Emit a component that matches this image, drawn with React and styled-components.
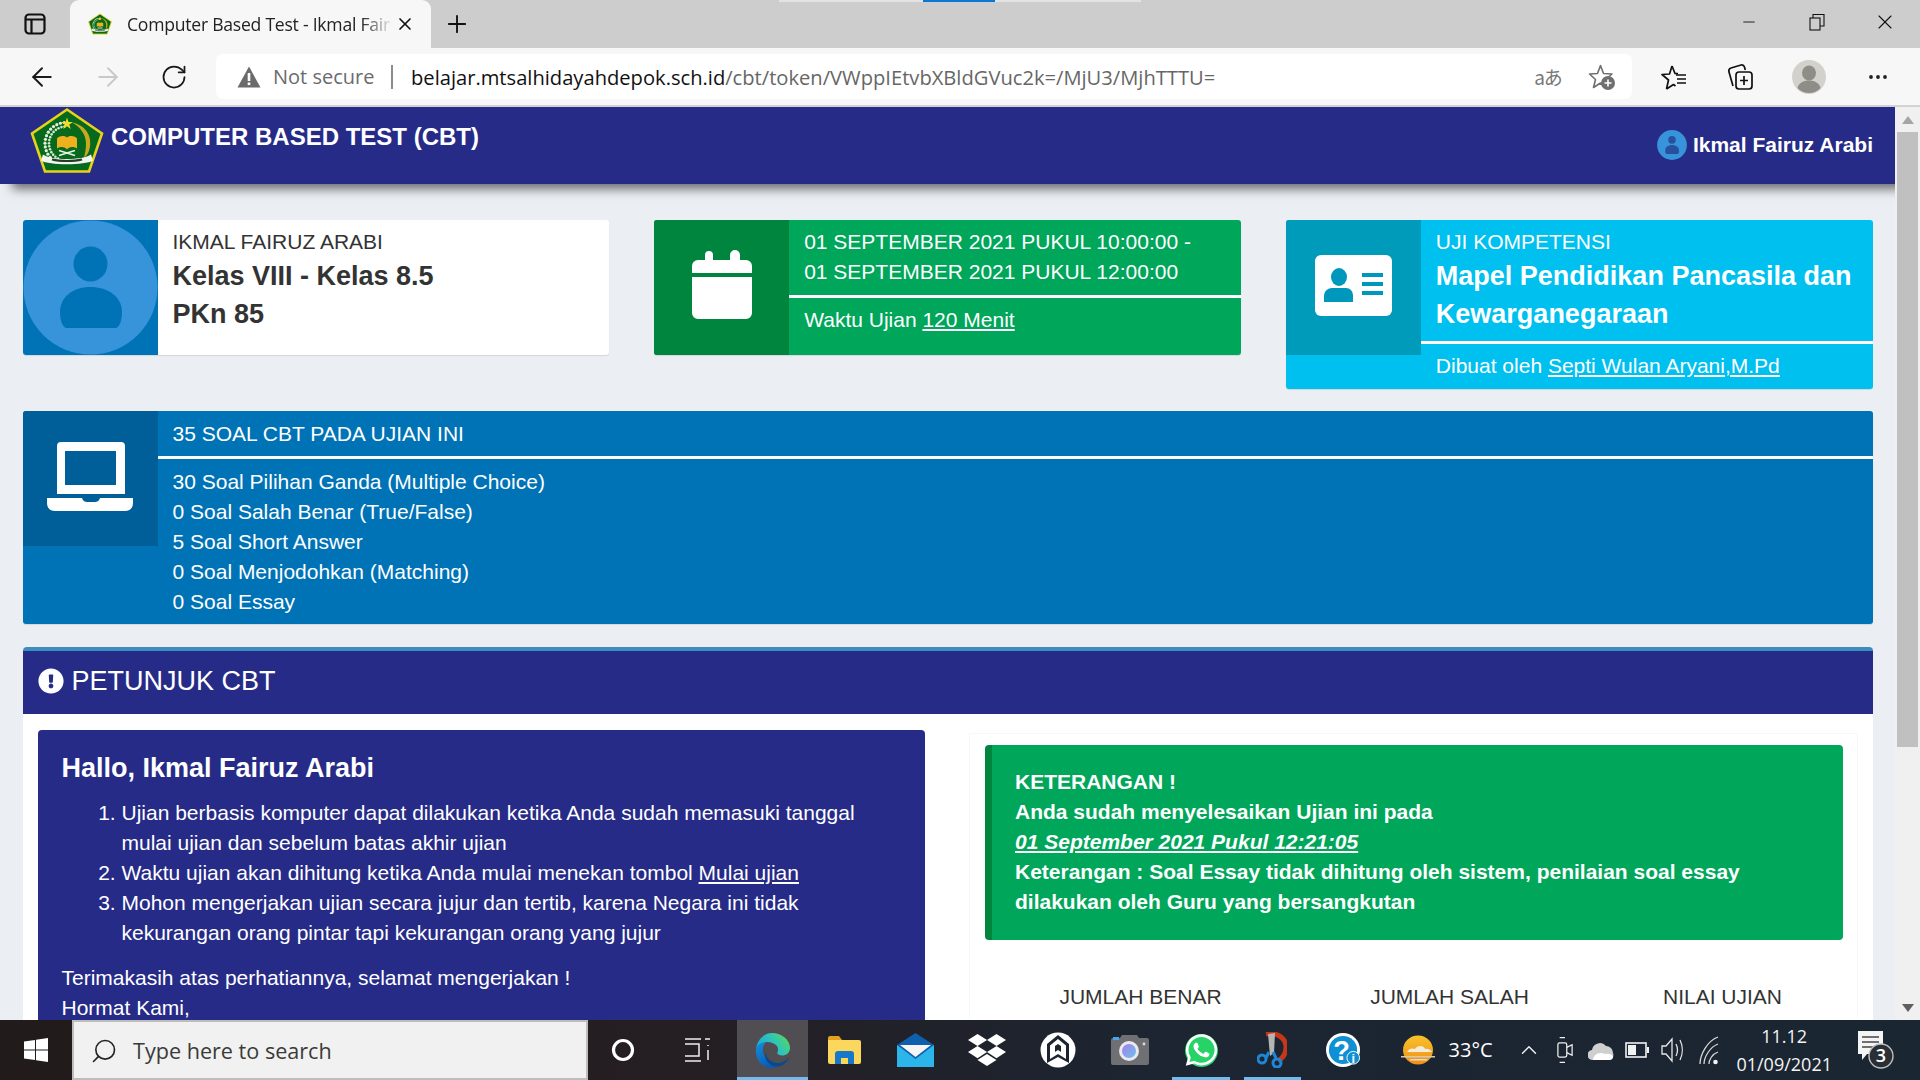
import React from 'react';
import styled, { createGlobalStyle } from 'styled-components';
import { ArrowLeft, ArrowRight, RotateCw, X, Plus, Minus, ChevronUp, Search } from 'lucide-react';
import { FaDropbox, FaWhatsapp, FaExclamationCircle } from 'react-icons/fa';

const Global = createGlobalStyle`
  html, body { margin: 0; padding: 0; overflow: hidden; background: #ecf0f5; }
  * { box-sizing: border-box; }
  #root { height: 1080px; font-family: "Liberation Sans", Arial, sans-serif; }
`;
const UI = `"Open Sans", "Noto Sans", sans-serif`;

const Screen = styled.div`width: 1920px; height: 1080px; display: flex; flex-direction: column; overflow: hidden; position: relative;`;

/* ---------- browser chrome ---------- */
const TabStrip = styled.div`height: 48px; flex: none; background: #cdcdcd; display: flex; align-items: stretch; position: relative;`;
const LoadStrip = styled.div`position: absolute; top: 0; left: 779px; width: 362px; height: 2px; background: #e3e3e3;`;
const LoadThumb = styled.div`width: 72px; height: 2px; margin-left: 144px; background: #0a78d2;`;
const StripBtn = styled.div`width: ${p => p.$w}px; display: flex; align-items: center; justify-content: center; color: #111; flex: none;`;
const Tab = styled.div`width: 361px; height: 48px; flex: none; background: #f7f7f7; border-radius: 9px 9px 0 0; display: flex; align-items: center; padding-left: 18px;`;
const TabTitle = styled.div`
  width: 266px; margin-left: 15px; font: 17.6px/24px ${UI}; letter-spacing: -.25px; color: #222; white-space: nowrap; overflow: hidden;
  -webkit-mask-image: linear-gradient(90deg, #000 88%, transparent 100%);
  mask-image: linear-gradient(90deg, #000 88%, transparent 100%);
`;
const TabClose = styled.div`display: flex; margin-left: 2px;`;
const WinControls = styled.div`margin-left: auto; display: flex; height: 44px; padding-right: 1px;`;
const Toolbar = styled.div`height: 59px; flex: none; background: #f7f7f7; border-bottom: 2px solid #d2d2d2; display: flex; align-items: center; padding-left: 9px;`;
const NavBtn = styled.div`width: ${p => p.$w || 66}px; flex: none; display: flex; align-items: center; justify-content: center; color: ${p => p.$c || '#1a1a1a'};`;
const Address = styled.div`width: 1416px; height: 45px; flex: none; margin: 0 8px 0 9px; background: #fff; border-radius: 7px; display: flex; align-items: center; padding-left: 21px; padding-right: 3px;`;
const NotSecure = styled.span`margin-left: 12px; font: 20px/26px ${UI}; color: #6b6b6b; width: 118px; flex: none; white-space: nowrap;`;
const Sep = styled.span`width: 2px; height: 24px; background: #8c8c8c; flex: none;`;
const Url = styled.div`margin-left: 18px; flex: 1; font: 20.15px/26px ${UI}; color: #111; white-space: nowrap;`;
const UrlRest = styled.span`color: #666;`;
const Translate = styled.span`font: 19px/24px "Noto Sans CJK JP", "Open Sans", sans-serif; color: #777; letter-spacing: -1px;`;

/* ---------- page ---------- */
const Viewport = styled.div`flex: 1; min-height: 0; display: flex;`;
const Page = styled.div`flex: 1; min-width: 0; background: #ebeef3; overflow: hidden;`;
const Header = styled.header`
  height: 77px; background: #262b87; display: flex; align-items: flex-start; padding-left: 30px; padding-right: 22px;
  position: relative; z-index: 1; box-shadow: 12px 5px 10px rgba(0,0,0,.55); color: #fff;
`;
const HeaderTitle = styled.div`margin: 15px 0 0 7px; font: bold 24px/30px "Liberation Sans", Arial, sans-serif; white-space: nowrap;`;
const HeaderUser = styled.div`margin: 23px 0 0 auto; display: flex; align-items: center; gap: 6px; font: bold 21px/30px "Liberation Sans", Arial, sans-serif; white-space: nowrap;`;
const Content = styled.div`padding: 36px 22.5px 0;`;
const CardRow = styled.div`display: grid; grid-template-columns: repeat(3, 1fr); gap: 45px; align-items: start;`;
const Card = styled.div`
  min-height: 135px; background: ${p => p.$bg}; color: ${p => p.$fg || '#fff'}; border-radius: 3px; overflow: hidden; display: block;
  box-shadow: 0 1px 1px rgba(0,0,0,.1); margin-bottom: 22.5px; font-size: 21px; line-height: 30px;
`;
const CardIcon = styled.div`float: left; width: 135px; height: 135px; background: ${p => p.$bg}; display: flex;`;
const CardBody = styled.div`margin-left: 135px; padding: ${p => p.$wide ? '7.5px' : '6.5px'} 15px 7.5px;`;
const CardLabel = styled.div`white-space: nowrap;`;
const CardNumber = styled.div`font-weight: bold; font-size: 27px; line-height: 38px;`;
const Divider = styled.div`height: 3px; background: #fff; margin: ${p => p.$wide ? '7.5px -15px' : '8.5px -15px 7px'};`;
const Link = styled.span`text-decoration: underline;`;

const Section = styled.section`background: #fff; border-top: 4.5px solid #3c8dbc; border-radius: 4px 4px 0 0;`;
const SectionHead = styled.div`height: 63px; background: #262b87; color: #fff; display: flex; align-items: center; gap: 8px; padding: 0 15px 2px; font-size: 27px;`;
const SectionBody = styled.div`display: grid; grid-template-columns: 887px 889px; column-gap: 44px; padding: 16px 15px 0;`;
const HelloBox = styled.div`background: #262b87; color: #fff; border-radius: 4px; padding: 23.5px 24px; font-size: 21px; line-height: 30px;`;
const HelloTitle = styled.h4`margin: 0 0 14.5px; font-size: 27px; line-height: 30px; font-weight: bold;`;
const Steps = styled.ol`margin: 0 0 15px; padding-left: 60px;`;
const Para = styled.p`margin: 0;`;
const Result = styled.div`border: 1px solid #f8f8f8; margin-top: 3px; padding: 11px 14px 15px 15px;`;
const Notice = styled.div`background: #00a65a; color: #fff; border-left: 7px solid #00853f; border-radius: 4px; padding: 22.5px 23.5px; font-weight: bold; font-size: 21px; line-height: 30px;`;
const NoticeDate = styled.em`text-decoration: underline; display: block;`;
const ScoreRow = styled.div`display: grid; grid-template-columns: 312px 306px 240px; margin-top: 42px; text-align: center; font-size: 21px; line-height: 30px; color: #333;`;

const ScrollTrack = styled.div`width: 25px; flex: none; background: #f0f0f1; display: flex; flex-direction: column; align-items: center;`;
const ScrollArrow = styled.div`
  height: 25px; width: 25px; flex: none; display: flex; align-items: center; justify-content: center; margin-top: ${p => p.$down ? 'auto' : '0'};
  &::before { content: ''; border-left: 6px solid transparent; border-right: 6px solid transparent;
    ${p => p.$down ? 'border-top: 8px solid #5f5f5f;' : 'border-bottom: 8px solid #a5a5a5;'} }
`;
const ScrollThumb = styled.div`width: 21px; height: 615px; background: #c0c0c0; flex: none;`;

/* ---------- taskbar ---------- */
const Taskbar = styled.div`height: 60px; flex: none; background: linear-gradient(90deg, #211b1b 0%, #251e22 35%, #1c2531 60%, #1a2632 100%); display: flex; color: #fff; position: relative;`;
const StartBtn = styled.div`width: 72px; flex: none; display: flex; align-items: center; justify-content: center;`;
const SearchBox = styled.div`width: 516px; flex: none; background: #f1f1f1; border: 2px solid #bdbdbd; display: flex; align-items: center; padding: 2px 0 0 16px; gap: 15px; font: 21.6px/30px ${UI}; color: #3a3a3a;`;
const TbBtn = styled.div`width: ${p => p.$w}px; flex: none; display: flex; align-items: center; justify-content: center;`;
const Slot = styled.div`
  width: 71.4px; flex: none; display: flex; align-items: center; justify-content: center; position: relative;
  background: ${p => p.$active ? '#504e53' : 'transparent'};
  &::after {
    content: ''; position: absolute; bottom: 0; height: 3px; background: #76b9ed;
    left: ${p => p.$active ? '0' : '7px'}; right: ${p => p.$active ? '0' : '7px'};
    display: ${p => p.$open ? 'block' : 'none'};
  }
`;
const Weather = styled.div`width: 131.700px; flex: none; display: flex; align-items: center; padding-left: 21px; gap: 14px; font: 20px/26px ${UI};`;
const TrayIcon = styled.div`width: 36px; flex: none; display: flex; align-items: center; justify-content: center; color: #f2f2f2;`;
const Clock = styled.div`width: 114px; flex: none; text-align: center; font: 18px/28px ${UI}; padding-top: 2px; color: #f4f4f4;`;
const Notif = styled.div`width: 79px; flex: none; display: flex; align-items: center; justify-content: center; padding-right: 10px;`;

/* ---------- drawings ---------- */
const Logo = ({ w, h }) => {
  const dots = [];
  for (let i = 0; i < 15; i++) {
    const a = (95 + i * 10.5) * Math.PI / 180;
    dots.push(<circle key={i} cx={36 + 21 * Math.cos(a)} cy={36 - 21 * Math.sin(a)} r="1.600" fill="#e4efe0" />);
    dots.push(<circle key={'b' + i} cx={36 + 17 * Math.cos(a)} cy={36 - 17 * Math.sin(a)} r="1.300" fill="#d6e6cf" />);
  }
  return (
    <svg width={w} height={h} viewBox="0 0 74 66">
      <path d="M37 2 72 26 59 64H15L2 26Z" fill="#07691b" stroke="#e6d21a" strokeWidth="2.600" strokeLinejoin="miter" />
      <path d="M42 15c12 2 20 12 18 24-1 6-3 9-6 11 1-4 2-9 2-14 0-9-6-17-14-21Z" fill="#c6a91f" />
      {dots}
      <path d="m37 10 1.500 4.400H43l-3.700 2.700 1.400 4.400-3.700-2.700-3.700 2.700 1.400-4.400-3.700-2.700h4.600Z" fill="#f3dc2d" />
      <path d="M27 31c3-3 7-3 10-1 3-2 7-2 10 1v10c-4-2-7-2-10 1-3-3-6-3-10-1Z" fill="#efb01e" />
      <path d="M29 48 45 43M45 48 29 43" stroke="#e9f1e8" strokeWidth="1.500" />
      <path d="M13 47c8 6 40 6 48 0l2 6c-8 5-44 5-52 0Z" fill="#f1f4ef" />
      <path d="M22 52c8 2 22 2 30 0" stroke="#243d24" strokeWidth="2" fill="none" />
    </svg>
  );
};

const Avatar = ({ size, ink }) => (
  <svg width={size} height={size} viewBox="0 0 135 135">
    <circle cx="67.500" cy="67.500" r="67" fill="#3793da" />
    <ellipse cx="67.500" cy="44" rx="17" ry="17.500" fill={ink} />
    <path d="M37 92c0-15 13-25 30.500-25S99 77 99 92c0 7-2 15-6 16H43c-4-1-6-9-6-16Z" fill={ink} />
  </svg>
);

const CalIcon = () => (
  <svg width="135" height="135" viewBox="0 0 135 135">
    <path fill="#fff" d="M51 35a4 4 0 0 1 8 0v5h17v-5a5 5 0 0 1 10 0v5h6a6 6 0 0 1 6 6v7H38v-7a6 6 0 0 1 6-6h7ZM38 57h60v36a6 6 0 0 1-6 6H44a6 6 0 0 1-6-6Z" />
  </svg>
);
const IdIcon = () => (
  <svg width="135" height="135" viewBox="0 0 135 135">
    <rect x="29" y="35" width="77" height="61" rx="6" fill="#fff" />
    <ellipse cx="53" cy="57" rx="8" ry="9" fill="#0097bc" />
    <path d="M38 82v-6c0-5 4-8 8-8h14c4 0 7 3 7 8v6Z" fill="#0097bc" />
    <path d="M76 53h21v4H76ZM76 62h21v4H76ZM76 71h21v4H76Z" fill="#0097bc" />
  </svg>
);
const LaptopIcon = () => (
  <svg width="135" height="135" viewBox="0 0 135 135">
    <path fill="#fff" fillRule="evenodd" d="M38 31h60a4 4 0 0 1 4 4v48H34V35a4 4 0 0 1 4-4Zm4 9v34h51V40Z" />
    <path fill="#fff" d="M24 87h35c1 3 3 4 5 4h8c2 0 4-1 5-4h33v5c0 5-3 8-8 8H32c-5 0-8-3-8-8Z" />
  </svg>
);
const PanelIcon = () => (
  <svg width="24" height="24" viewBox="0 0 24 24" fill="none" stroke="#111" strokeWidth="2.200">
    <rect x="2.500" y="2.500" width="19" height="19" rx="3.500" />
    <path d="M2.500 7.500h19M8.500 7.500v14" />
  </svg>
);
const RestoreIcon = () => (
  <svg width="16" height="18" viewBox="0 0 16 18" fill="none" stroke="#111" strokeWidth="1.100">
    <rect x="1" y="5" width="10" height="12" />
    <path d="M4 5V1.500h11V13h-4" />
  </svg>
);
const WarnIcon = () => (
  <svg width="24" height="22" viewBox="0 0 24 22">
    <path d="M12 0.500 23.500 21.500H.5Z" fill="#6b6b6b" />
    <rect x="10.700" y="7" width="2.600" height="8" fill="#fff" />
    <rect x="10.700" y="16.500" width="2.600" height="2.600" fill="#fff" />
  </svg>
);
const StarAdd = () => (
  <svg width="28" height="28" viewBox="0 0 28 28" fill="none">
    <path d="M12.500 2.500 15.500 10.500l8.500.5-6.500 5.500 2 8-7-4.500-7 4.500 2-8L1.500 11l8-.5Z" stroke="#6f6f6f" strokeWidth="1.600" strokeLinejoin="round" />
    <circle cx="20" cy="20" r="7" fill="#6f6f6f" />
    <path d="M20 16.500v7M16.500 20h7" stroke="#fff" strokeWidth="1.600" />
  </svg>
);
const FavList = () => (
  <svg width="26" height="26" viewBox="0 0 26 26" fill="none" stroke="#111" strokeWidth="1.700" strokeLinejoin="round">
    <path d="M11 2 14 9.500l3 .2M5.500 25l2-9L1 10.500 8.500 10 11 2M5.500 25l7-4.500 2 1.500" />
    <path d="M15 11h10M16 15h9M16 19h9" />
  </svg>
);
const Collections = () => (
  <svg width="26" height="28" viewBox="0 0 26 28" fill="none" stroke="#111" strokeWidth="1.700">
    <rect x="9" y="9" width="16" height="17" rx="3" />
    <path d="M17 13v9M13 17.500h8" />
    <path d="M6 23 2 9c-.6-2 .5-3.500 2-4l10-3c1.500-.3 3 .5 3.500 2l.8 3" />
  </svg>
);
const Profile = () => (
  <svg width="34" height="34" viewBox="0 0 34 34">
    <circle cx="17" cy="17" r="17" fill="#d2d1cc" />
    <ellipse cx="17" cy="13" rx="7" ry="7.500" fill="#8f8d88" />
    <path d="M5.500 28c1-5 6-7.500 11.500-7.500S27.500 23 28.500 28c-3 3.500-7 5-11.500 5S8.500 31.500 5.500 28Z" fill="#8f8d88" />
  </svg>
);
const Dots = () => (
  <svg width="20" height="6" viewBox="0 0 20 6"><circle cx="3" cy="3" r="1.900" fill="#222" /><circle cx="10" cy="3" r="1.900" fill="#222" /><circle cx="17" cy="3" r="1.900" fill="#222" /></svg>
);
const WinLogo = () => (
  <svg width="24" height="24" viewBox="0 0 24 24" fill="#fff">
    <path d="M0 3.500 11 2v9.500H0ZM12 1.800 24 0v11.500H12ZM0 12.500h11V22L0 20.500ZM12 12.500h12V24l-12-1.800Z" />
  </svg>
);
const Cortana = () => (
  <svg width="24" height="24" viewBox="0 0 24 24"><circle cx="12" cy="12" r="9.500" fill="none" stroke="#fff" strokeWidth="3.200" /></svg>
);
const TaskView = () => (
  <svg width="26" height="24" viewBox="0 0 26 24" fill="none" stroke="#eee" strokeWidth="1.500">
    <path d="M0 1h16M0 6h14v12H0M0 23h16M20 1h5M23 7v1M23 12v10" />
  </svg>
);
const Edge = () => (
  <svg width="37" height="37" viewBox="0 0 37 37">
    <defs>
      <linearGradient id="eg" x1="0" y1="0.800" x2="1" y2="0.300"><stop offset="0" stopColor="#1a9fdc" /><stop offset="0.600" stopColor="#2fc5b8" /><stop offset="1" stopColor="#55d85f" /></linearGradient>
      <linearGradient id="eb" x1="0" y1="0" x2="0.600" y2="1"><stop offset="0" stopColor="#0f8fe0" /><stop offset="1" stopColor="#0c59ae" /></linearGradient>
    </defs>
    <path d="M2 17C3 8 10 1 18 1c10 0 18 7 18 15 0 5-4 7.500-8 7.500-2.500 0-4.500-1-5-2.500 1.500-2 1.500-5-.5-7.500C19 10 13 9 9 11c-4 2-6 4-7 6Z" fill="url(#eg)" />
    <path d="M2 17c1-4 5-7 10-6.500-5 3.500-4 13.500 2 18.500 3 3 7 5 10 5-3 1.500-5 2-7 2C8 36 1 27 2 17Z" fill="url(#eb)" />
    <path d="M12 20c0 7 6 11 12 11 4 0 8-2 11-6-2 6-7 10-13 9.500C15 34 9 27 12 20Z" fill="#0a4a8c" />
  </svg>
);
const Folder = () => (
  <svg width="33" height="28" viewBox="0 0 33 28">
    <path d="M0 2a2 2 0 0 1 2-2h9l3 4H0Z" fill="#e5a021" />
    <path d="M0 4h31a2 2 0 0 1 2 2v20a2 2 0 0 1-2 2H2a2 2 0 0 1-2-2Z" fill="#fbd75e" />
    <path d="M7 28V18a3 3 0 0 1 3-3h13a3 3 0 0 1 3 3v10h-6v-6h-7v6Z" fill="#1777c8" />
  </svg>
);
const Mail = () => (
  <svg width="37" height="34" viewBox="0 0 37 34">
    <path d="M0 12 18.500 0 37 12v22H0Z" fill="#0e5fae" />
    <path d="M0 12v22h37V12L18.500 26Z" fill="#2cb5ea" />
    <path d="M3 12h31L18.500 24Z" fill="#f5f5f5" />
  </svg>
);
const Bookmark = () => (
  <svg width="36" height="36" viewBox="0 0 36 36">
    <circle cx="18" cy="18" r="17.500" fill="#fff" />
    <path d="M7 31V12L18 3l11 9v19l-11-6Z" fill="#1c2430" />
    <path d="M10 27V13.500l8-6.500 8 6.500V27l-8-5Z" fill="#fff" />
    <path d="M15 20v-6l3-2 3 2v6l-3-2Z" fill="#1c2430" />
  </svg>
);
const Camera = () => (
  <svg width="38" height="30" viewBox="0 0 38 30">
    <defs><linearGradient id="lens" x1="0" y1="0" x2="1" y2="1"><stop offset="0" stopColor="#a57de8" /><stop offset="1" stopColor="#6bc2ee" /></linearGradient></defs>
    <path d="M0 5a2 2 0 0 1 2-2h7l2-3h15l2 3h8a2 2 0 0 1 2 2v23a2 2 0 0 1-2 2H2a2 2 0 0 1-2-2Z" fill="#6f7074" />
    <rect x="2" y="2" width="6" height="3" fill="#4aa5e8" />
    <circle cx="18" cy="16" r="10" fill="#e9e9ee" />
    <circle cx="18" cy="16" r="7" fill="url(#lens)" />
    <circle cx="33" cy="9" r="1.400" fill="#ddd" />
  </svg>
);
const WaIconWrap = styled.div`width: 33px; height: 33px; border-radius: 50%; background: #25d366; display: flex; align-items: center; justify-content: center; color: #fff;`;
const Snip = () => (
  <svg width="30" height="36" viewBox="0 0 30 36" fill="none">
    <path d="M9 2C20 0 29 6 29 15c0 6-3 11-8 14" stroke="#c6361a" strokeWidth="5" />
    <path d="M11 2 18 1 17 21 13 24Z" fill="#b4b4b4" />
    <path d="M12 20 9 26M16 20l3 6" stroke="#1f86d6" strokeWidth="3" />
    <circle cx="5" cy="27" r="4" stroke="#1f86d6" strokeWidth="3" />
    <circle cx="20" cy="31" r="4" stroke="#1f86d6" strokeWidth="3" />
  </svg>
);
const HelpBadge = styled.div`width: 35px; height: 36px; display: flex;`;
const Help = () => (
  <svg width="36" height="36" viewBox="0 0 36 36">
    <circle cx="17.500" cy="18" r="17.500" fill="#fff" />
    <circle cx="17.500" cy="18" r="14.500" fill="#0f8fd4" />
    <text x="16" y="28" fontFamily="Liberation Sans" fontWeight="bold" fontSize="28" fill="#fff" textAnchor="middle">?</text>
    <circle cx="28" cy="26" r="6.500" fill="#0f8fd4" stroke="#fff" />
    <text x="28" y="31" fontFamily="Liberation Sans" fontWeight="bold" fontSize="13" fill="#fff" textAnchor="middle">i</text>
  </svg>
);
const Sun = () => (
  <svg width="34" height="30" viewBox="0 0 34 30">
    <defs><linearGradient id="sun" x1="0" y1="0" x2="0" y2="1"><stop offset="0" stopColor="#f9c22a" /><stop offset="1" stopColor="#f08f1c" /></linearGradient></defs>
    <ellipse cx="17" cy="15" rx="15" ry="14.500" fill="url(#sun)" />
    <path d="M6 17c2-4 6-4 8-3 2-4 9-4 10 0 3-1 6 1 7 3Z" fill="#f4ecd8" />
    <path d="M0 21h34v1.500H0Z" fill="#d9c9a8" />
    <path d="M9 24h17v1.500H9Z" fill="#e5dbc4" />
  </svg>
);
const ChevronTray = () => <ChevronUp size={26} strokeWidth={1.3} />;
const MicTray = () => (
  <svg width="16" height="28" viewBox="0 0 18 30" fill="none" stroke="#f0f0f0" strokeWidth="1.400">
    <rect x="1" y="7" width="10" height="16" rx="2" />
    <path d="M11 12l6-3v12l-6-3M3 1h6M3 29h6" />
  </svg>
);
const CloudTray = () => (
  <svg width="26" height="22" viewBox="0 0 26 22">
    <path d="M5 21a5 5 0 0 1-1-10 8 8 0 0 1 14-4 7 7 0 0 1 7 7c1 3 0 7-4 7Z" fill="#cfcfcf" />
    <path d="M5 21c0-5 6-9 12-6 4-1 8 1 8 3 0 2-2 3-4 3Z" fill="#fff" />
  </svg>
);
const BatteryTray = () => (
  <svg width="24" height="16" viewBox="0 0 24 16" fill="none">
    <rect x="1" y="1" width="20" height="14" stroke="#f2f2f2" strokeWidth="1.600" />
    <rect x="3" y="3" width="8" height="10" fill="#f2f2f2" />
    <rect x="22" y="5" width="2" height="6" fill="#f2f2f2" />
  </svg>
);
const VolumeTray = () => (
  <svg width="24" height="28" viewBox="0 0 24 28" fill="none" stroke="#e8e8e8" strokeWidth="1.300">
    <path d="M1 10v8h4l6 7V3l-6 7ZM15 8c2 4 2 8 0 12M19 4c3 6 3 14 0 20" />
  </svg>
);
const WifiTray = () => (
  <svg width="20" height="30" viewBox="0 0 20 30" fill="none" stroke="#d8d8d8" strokeWidth="1.300">
    <path d="M1 29C1 20 8 6 19 2M5 29c0-7 6-17 14-20M10 29c0-4 3-10 9-12" />
    <circle cx="16.500" cy="27" r="2.300" fill="#f2f2f2" stroke="none" />
  </svg>
);
const NotifIcon = () => (
  <svg width="36" height="38" viewBox="0 0 36 38">
    <path d="M0 0h25v23H9l-5 6v-6H0Z" fill="#f4f4f4" />
    <path d="M4 6h17M4 11h17M4 16h11" stroke="#444" strokeWidth="1.400" />
    <circle cx="23" cy="25" r="12" fill="#2a2f36" stroke="#bfbfbf" strokeWidth="1.400" />
    <text x="23" y="31" fontFamily="Open Sans" fontSize="18" fontWeight="600" fill="#fff" textAnchor="middle">3</text>
  </svg>
);

export default function App() {
  return (
    <Screen>
      <Global />
      <TabStrip>
        <LoadStrip><LoadThumb /></LoadStrip>
        <StripBtn $w={70}><PanelIcon /></StripBtn>
        <Tab>
          <Logo w={24} h={24} />
          <TabTitle>Computer Based Test - Ikmal Fair</TabTitle>
          <TabClose><X size={20} strokeWidth={2} color="#111" /></TabClose>
        </Tab>
        <StripBtn $w={52}><Plus size={28} strokeWidth={1.6} /></StripBtn>
        <WinControls>
          <StripBtn $w={68}><Minus size={18} strokeWidth={1.2} /></StripBtn>
          <StripBtn $w={68}><RestoreIcon /></StripBtn>
          <StripBtn $w={68}><X size={24} strokeWidth={1.1} /></StripBtn>
        </WinControls>
      </TabStrip>
      <Toolbar>
        <NavBtn><ArrowLeft size={30} strokeWidth={1.5} /></NavBtn>
        <NavBtn $c="#c9c9c9"><ArrowRight size={30} strokeWidth={1.5} /></NavBtn>
        <NavBtn><RotateCw size={28} strokeWidth={1.5} /></NavBtn>
        <Address>
          <WarnIcon />
          <NotSecure>Not secure</NotSecure>
          <Sep />
          <Url>belajar.mtsalhidayahdepok.sch.id<UrlRest>/cbt/token/VWppIEtvbXBldGVuc2k=/MjU3/MjhTTTU=</UrlRest></Url>
          <NavBtn $w={54}><Translate>aあ</Translate></NavBtn>
          <NavBtn $w={54}><StarAdd /></NavBtn>
        </Address>
        <NavBtn $w={67}><FavList /></NavBtn>
        <NavBtn $w={66}><Collections /></NavBtn>
        <NavBtn $w={71}><Profile /></NavBtn>
        <NavBtn $w={68}><Dots /></NavBtn>
      </Toolbar>

      <Viewport>
        <Page>
          <Header>
            <Logo w={74} h={67} />
            <HeaderTitle>COMPUTER BASED TEST (CBT)</HeaderTitle>
            <HeaderUser><Avatar size={30} ink="#27509f" />Ikmal Fairuz Arabi</HeaderUser>
          </Header>
          <Content>
            <CardRow>
              <Card $bg="#fff" $fg="#333">
                <CardIcon $bg="#0073b7"><Avatar size={135} ink="#0073b7" /></CardIcon>
                <CardBody>
                  <CardLabel>IKMAL FAIRUZ ARABI</CardLabel>
                  <CardNumber>Kelas VIII - Kelas 8.5</CardNumber>
                  <CardNumber>PKn 85</CardNumber>
                </CardBody>
              </Card>
              <Card $bg="#00a65a">
                <CardIcon $bg="#00853f"><CalIcon /></CardIcon>
                <CardBody>
                  <CardLabel>01 SEPTEMBER 2021 PUKUL 10:00:00 -</CardLabel>
                  <CardLabel>01 SEPTEMBER 2021 PUKUL 12:00:00</CardLabel>
                  <Divider />
                  <CardLabel>Waktu Ujian <Link>120 Menit</Link></CardLabel>
                </CardBody>
              </Card>
              <Card $bg="#00c0ef">
                <CardIcon $bg="#009abb"><IdIcon /></CardIcon>
                <CardBody>
                  <CardLabel>UJI KOMPETENSI</CardLabel>
                  <CardNumber>Mapel Pendidikan Pancasila dan Kewarganegaraan</CardNumber>
                  <Divider />
                  <CardLabel>Dibuat oleh <Link>Septi Wulan Aryani,M.Pd</Link></CardLabel>
                </CardBody>
              </Card>
            </CardRow>
            <Card $bg="#0073b7">
              <CardIcon $bg="#005f98"><LaptopIcon /></CardIcon>
              <CardBody $wide>
                <CardLabel>35 SOAL CBT PADA UJIAN INI</CardLabel>
                <Divider $wide />
                <CardLabel>30 Soal Pilihan Ganda (Multiple Choice)</CardLabel>
                <CardLabel>0 Soal Salah Benar (True/False)</CardLabel>
                <CardLabel>5 Soal Short Answer</CardLabel>
                <CardLabel>0 Soal Menjodohkan (Matching)</CardLabel>
                <CardLabel>0 Soal Essay</CardLabel>
              </CardBody>
            </Card>
            <Section>
              <SectionHead><FaExclamationCircle size={26} />PETUNJUK CBT</SectionHead>
              <SectionBody>
                <HelloBox>
                  <HelloTitle>Hallo, Ikmal Fairuz Arabi</HelloTitle>
                  <Steps>
                    <li>Ujian berbasis komputer dapat dilakukan ketika Anda sudah memasuki tanggal mulai ujian dan sebelum batas akhir ujian</li>
                    <li>Waktu ujian akan dihitung ketika Anda mulai menekan tombol <Link>Mulai ujian</Link></li>
                    <li>Mohon mengerjakan ujian secara jujur dan tertib, karena Negara ini tidak kekurangan orang pintar tapi kekurangan orang yang jujur</li>
                  </Steps>
                  <Para>Terimakasih atas perhatiannya, selamat mengerjakan !</Para>
                  <Para>Hormat Kami,</Para>
                </HelloBox>
                <Result>
                  <Notice>
                    KETERANGAN !<br />
                    Anda sudah menyelesaikan Ujian ini pada<br />
                    <NoticeDate>01 September 2021 Pukul 12:21:05</NoticeDate>
                    Keterangan : Soal Essay tidak dihitung oleh sistem, penilaian soal essay dilakukan oleh Guru yang bersangkutan
                  </Notice>
                  <ScoreRow>
                    <div>JUMLAH BENAR</div>
                    <div>JUMLAH SALAH</div>
                    <div>NILAI UJIAN</div>
                  </ScoreRow>
                </Result>
              </SectionBody>
            </Section>
          </Content>
        </Page>
        <ScrollTrack>
          <ScrollArrow />
          <ScrollThumb />
          <ScrollArrow $down />
        </ScrollTrack>
      </Viewport>

      <Taskbar>
        <StartBtn><WinLogo /></StartBtn>
        <SearchBox><Search size={28} strokeWidth={1.4} color="#222" style={{ transform: 'scaleX(-1)' }} />Type here to search</SearchBox>
        <TbBtn $w={70}><Cortana /></TbBtn>
        <TbBtn $w={79}><TaskView /></TbBtn>
        <Slot $active $open><Edge /></Slot>
        <Slot><Folder /></Slot>
        <Slot><Mail /></Slot>
        <Slot><FaDropbox size={38} color="#fff" /></Slot>
        <Slot><Bookmark /></Slot>
        <Slot><Camera /></Slot>
        <Slot $open><WaIconWrap><FaWhatsapp size={36} /></WaIconWrap></Slot>
        <Slot $open><Snip /></Slot>
        <Slot><HelpBadge><Help /></HelpBadge></Slot>
        <Weather><Sun />33°C</Weather>
        <TrayIcon><ChevronTray /></TrayIcon>
        <TrayIcon><MicTray /></TrayIcon>
        <TrayIcon><CloudTray /></TrayIcon>
        <TrayIcon><BatteryTray /></TrayIcon>
        <TrayIcon><VolumeTray /></TrayIcon>
        <TrayIcon><WifiTray /></TrayIcon>
        <Clock>11.12<br />01/09/2021</Clock>
        <Notif><NotifIcon /></Notif>
      </Taskbar>
    </Screen>
  );
}
